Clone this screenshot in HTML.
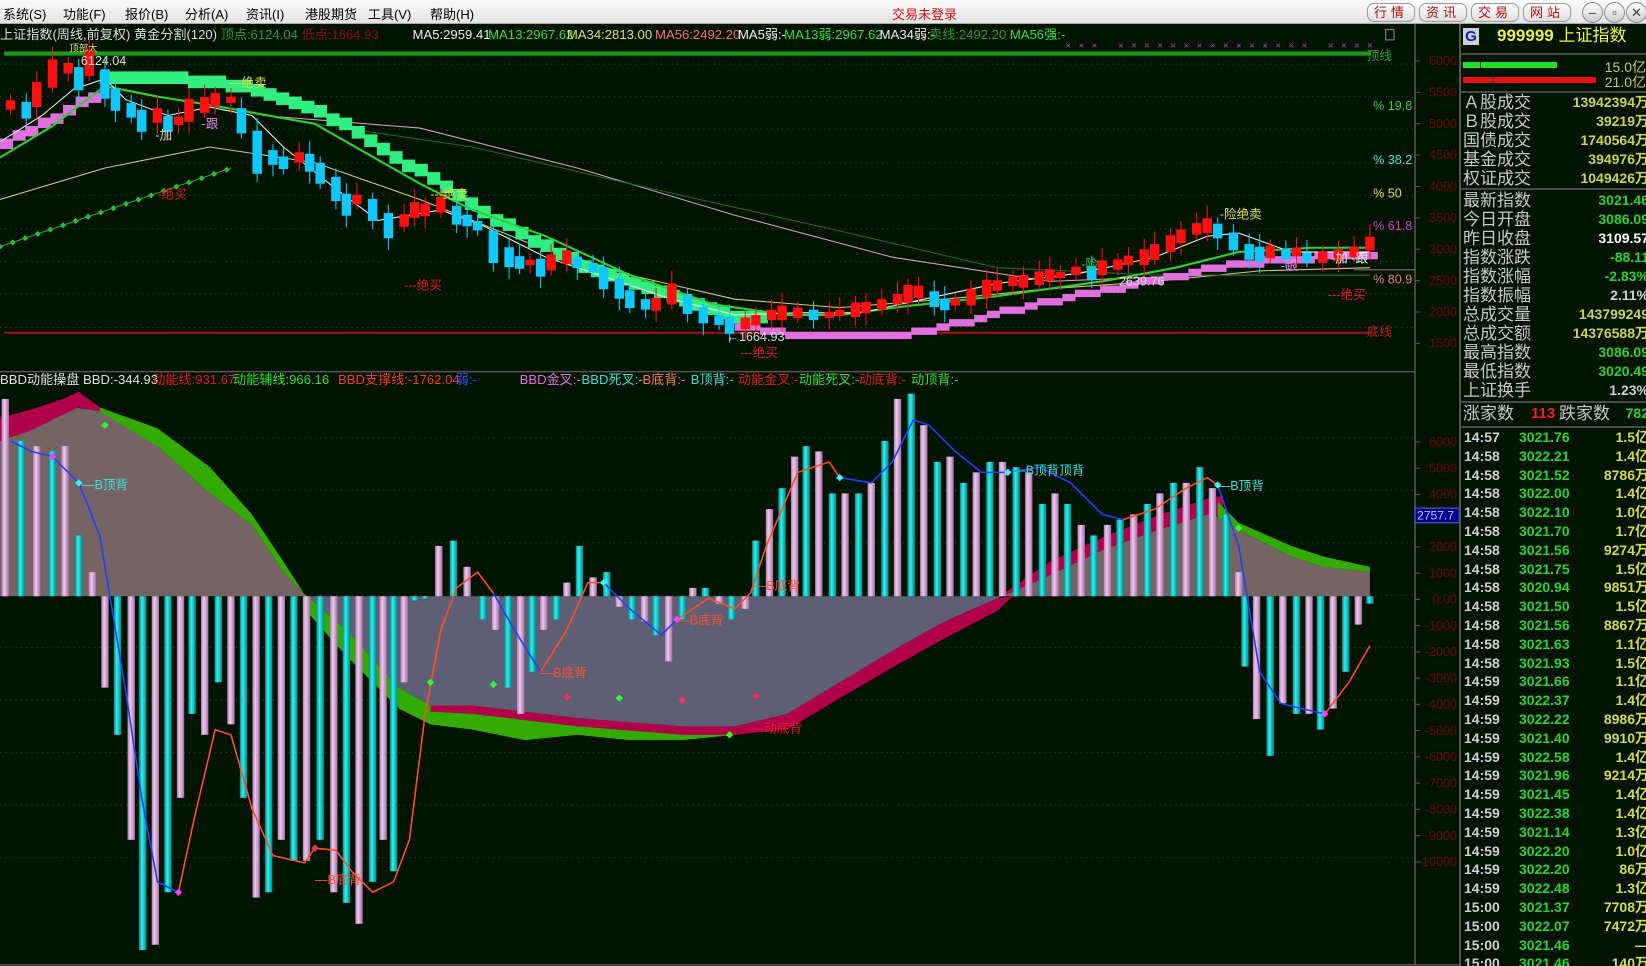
<!DOCTYPE html>
<html><head><meta charset="utf-8">
<style>
*{margin:0;padding:0;box-sizing:border-box}
body{width:1646px;height:966px;overflow:hidden;background:#001400;font-family:"Liberation Sans","Noto Sans CJK SC",sans-serif;position:relative}
#menu{position:absolute;left:0;top:0;width:1646px;height:24px;background:linear-gradient(#fafafa,#e4e4e4);border-bottom:1px solid #aaa;font-size:13px;color:#000}
#menu span.m{position:absolute;top:4px}
.btn{position:absolute;top:3px;height:19px;width:48px;border:1px solid #999;border-radius:7px;background:linear-gradient(#fff,#ddd);color:#b01010;font-size:13px;text-align:center;line-height:17px;letter-spacing:4px}
.cir{position:absolute;top:2px;width:21px;height:21px;border:1px solid #888;border-radius:50%;background:linear-gradient(#fff,#ccc);color:#444;font-size:13px;text-align:center;line-height:19px}
svg#ch{position:absolute;left:0;top:0}
#rp{position:absolute;left:1459px;top:24px;width:187px;height:942px;background:#001400;border-left:2px solid #555;overflow:hidden;font-family:"Liberation Sans","Noto Sans CJK SC",sans-serif}
.row{position:absolute;left:2px;width:200px;height:19px;font-size:17px;line-height:19px;color:#c8c8c8}
.row b{position:absolute;right:14px;top:0;font-weight:bold;font-size:14px}
.sep{position:absolute;left:0;width:187px;height:2px;background:#4a4a4a}
.tr{position:absolute;left:2px;width:200px;height:19px;font-size:14px;line-height:19px;font-weight:bold}
.tr .t{position:absolute;left:1px;color:#d0d0d0}
.tr .p{position:absolute;left:56px;color:#30d030}
.tr .v{position:absolute;right:14px;color:#d8d850}
</style></head><body>
<svg id="ch" width="1646" height="966" viewBox="0 0 1568 920.2" xmlns="http://www.w3.org/2000/svg">
<defs>
<linearGradient id="gp" x1="0" x2="1"><stop offset="0" stop-color="#b080b0"/><stop offset=".4" stop-color="#f0c8f0"/><stop offset="1" stop-color="#a070a0"/></linearGradient>
<linearGradient id="gc" x1="0" x2="1"><stop offset="0" stop-color="#009090"/><stop offset=".4" stop-color="#30f0f0"/><stop offset="1" stop-color="#008888"/></linearGradient>
<clipPath id="ab"><rect x="0" y="0" width="1320" height="568"/></clipPath>
<clipPath id="bl"><rect x="0" y="568" width="1320" height="400"/></clipPath>
</defs>
<rect x="0" y="0" width="1568" height="921" fill="#001400"/>
<g id="g"></g>
<line x1="1348" y1="22" x2="1348" y2="920" stroke="#555" stroke-width="1.5"/>
<line x1="0" y1="354" x2="1348" y2="354" stroke="#555" stroke-width="1.5"/>
<line x1="0" y1="919" x2="1390" y2="919" stroke="#555" stroke-width="1.5"/>
<rect x="1320" y="28" width="8" height="10" fill="none" stroke="#888" stroke-width="1"/>
<g font-size="12.5" fill="#ddd">
<text x="0" y="37"><tspan fill="#ddd">上证指数(周线,前复权) 黄金分割(120) </tspan><tspan fill="#2a9a2a">顶点:6124.04 </tspan><tspan fill="#8a1010">低点:1664.93</tspan></text>
<text x="393" y="37" fill="#eee">MA5:2959.41</text>
<text x="465" y="37" fill="#30e030">MA13:2967.62</text>
<text x="540" y="37" fill="#e0e060">MA34:2813.00</text>
<text x="624" y="37" fill="#ff7070">MA56:2492.20</text>
<text x="703" y="37" fill="#eee">MA5弱:-</text>
<text x="747" y="37" fill="#30e030">MA13弱:2967.62</text>
<text x="838" y="37" fill="#eee">MA34弱:-</text>
<text x="885" y="37" fill="#2a9a2a">卖线:2492.20</text>
<text x="962" y="37" fill="#30e030">MA56强:-</text>
<text x="0" y="366" fill="#e0e0e0">BBD动能操盘  BBD:-344.93</text>
<text x="145" y="366" fill="#e02020">动能线:931.67</text>
<text x="222" y="366" fill="#30e030">动能辅线:966.16</text>
<text x="322" y="366" fill="#f04020">BBD支撑线:-1762.04</text>
<text x="434" y="366" fill="#3050ff">弱:-</text>
<text x="495" y="366" fill="#e070e0">BBD金叉:-</text>
<text x="554" y="366" fill="#30e0e0">BBD死叉:-</text>
<text x="612" y="366" fill="#ff8040">B底背:-</text>
<text x="658" y="366" fill="#30e0e0">B顶背:-</text>
<text x="703" y="366" fill="#e02020">动能金叉:-</text>
<text x="761" y="366" fill="#30e030">动能死叉:-</text>
<text x="818" y="366" fill="#e02020">动底背:-</text>
<text x="868" y="366" fill="#30e030">动顶背:-</text>
</g>
<g font-size="12" fill="#6a0a0a" text-anchor="end" id="ax"></g>
<g font-size="12">
<text x="1308" y="105" fill="#30d030">% 19.8</text>
<text x="1308" y="156" fill="#40e0e0">% 38.2</text>
<text x="1308" y="188" fill="#e0e040">% 50</text>
<text x="1308" y="219" fill="#d040d0">% 61.8</text>
<text x="1308" y="270" fill="#e08080">% 80.9</text>
<line x1="1290" y1="257" x2="1348" y2="257" stroke="#777"/>
<text x="1302" y="57" fill="#30a030">顶线</text>
<text x="1302" y="320" fill="#c02020">底线</text>
<rect x="1348" y="484" width="42" height="14" fill="#000090" stroke="#6060c0"/>
<text x="1350" y="495" fill="#c0c0ff" font-size="11.5">2757.7</text>
</g>
<g font-size="12">
<text x="66" y="49" fill="#e0e060" font-size="9">顶部大</text>
<text x="77" y="62" fill="#ddd">6124.04</text>
<text x="218" y="83" fill="#e0e040">---绝卖</text>
<text x="148" y="133" fill="#f0d0d0">-加</text>
<text x="192" y="122" fill="#f080f0">-跟</text>
<text x="150" y="189" fill="#e02020">-绝买</text>
<text x="410" y="189" fill="#e0e040">---绝卖</text>
<text x="385" y="276" fill="#e02020">---绝买</text>
<text x="692" y="325" fill="#ddd">←1664.93</text>
<text x="705" y="340" fill="#e02020">---绝买</text>
<text x="1030" y="256" fill="#30d030">-险</text>
<text x="1066" y="272" fill="#ddd">2639.76</text>
<text x="1162" y="208" fill="#e0e040">-险绝卖</text>
<text x="1220" y="257" fill="#f080f0">-跟</text>
<text x="1268" y="250" fill="#eee">-加 -跟</text>
<text x="1265" y="285" fill="#e02020">---绝买</text>
<text x="78" y="466" fill="#40e0e0">—B顶背</text>
<text x="1160" y="467" fill="#40e0e0">—B顶背</text>
<text x="965" y="452" fill="#40e0e0">—B顶背顶背</text>
<text x="300" y="842" fill="#ff5030">—B底背</text>
<text x="515" y="645" fill="#ff5030">—B底背</text>
<text x="645" y="595" fill="#ff5030">—B底背</text>
<text x="718" y="562" fill="#ff5030">—B底背</text>
<text x="716" y="698" fill="#e02020">—动底背</text>
</g>
</svg>
<div id="menu">
<span class="m" style="left:3px">系统(S)</span><span class="m" style="left:63px">功能(F)</span><span class="m" style="left:125px">报价(B)</span><span class="m" style="left:185px">分析(A)</span><span class="m" style="left:246px">资讯(I)</span><span class="m" style="left:305px">港股期货</span><span class="m" style="left:368px">工具(V)</span><span class="m" style="left:430px">帮助(H)</span>
<span class="m" style="left:892px;color:#e01010">交易未登录</span>
<div class="btn" style="left:1367px">行情</div><div class="btn" style="left:1419px">资讯</div><div class="btn" style="left:1471px">交易</div><div class="btn" style="left:1523px">网站</div>
<div class="cir" style="left:1582px">–</div><div class="cir" style="left:1604px">▫</div><div class="cir" style="left:1626px">✕</div>
</div>
<div id="rp"></div>
<script>
(function(){
var NS="http://www.w3.org/2000/svg",G=document.getElementById("g");
function el(t,a){var e=document.createElementNS(NS,t);for(var k in a)e.setAttribute(k,a[k]);G.appendChild(e);return e}
function pl(p,c,w){return el("polyline",{points:p.map(function(q){return q.join(",")}).join(" "),fill:"none",stroke:c,"stroke-width":w||1})}
function interp(p,x){for(var i=0;i<p.length-1;i++){if(x>=p[i][0]&&x<=p[i+1][0]){var t=(x-p[i][0])/(p[i+1][0]-p[i][0]);return p[i][1]+t*(p[i+1][1]-p[i][1])}}return p[p.length-1][1]}
function steps(p,c,h,sw){for(var x=p[0][0];x<p[p.length-1][0];x+=sw){var y=Math.round(interp(p,x)/4)*4;el("rect",{x:x,y:y,width:sw+0.5,height:h,fill:c})}}
function band(xs,tp,bt,c){var pts=[];for(var i=0;i<xs.length;i++)pts.push(xs[i]+","+tp[i]);for(var i=xs.length-1;i>=0;i--)pts.push(xs[i]+","+bt[i]);el("polygon",{points:pts.join(" "),fill:c})}
[61,92,123,155,186,218,249,280,312].forEach(function(y){el("line",{x1:0,y1:y,x2:1348,y2:y,stroke:"#2e4a2e","stroke-dasharray":"1 4"})});
[417,467,517,567,617,667,717,767,817].forEach(function(y){el("line",{x1:0,y1:y,x2:1348,y2:y,stroke:"#2e4a2e","stroke-dasharray":"1 4"})});
var ax=document.getElementById("ax");
function at(x,y,s){var t=document.createElementNS(NS,"text");t.setAttribute("x",x);t.setAttribute("y",y);t.textContent=s;ax.appendChild(t);var l=document.createElementNS(NS,"line");l.setAttribute("x1",1348);l.setAttribute("x2",1353);l.setAttribute("y1",y-4);l.setAttribute("y2",y-4);l.setAttribute("stroke","#555");ax.appendChild(l)}
[6000,5500,5000,4500,4000,3500,3000,2500,2000,1500].forEach(function(v,i){at(1388,62+i*29.9,String(v))});
[["6000",421],["5000",446],["4000",471],["2000",521],["1000",546],["0.00",571],["-1000",596],["-2000",621],["-3000",646],["-4000",671],["-5000",696],["-6000",721],["-7000",746],["-8000",771],["-9000",796],["-10000",821]].forEach(function(a){at(1388,a[1]+4,a[0])});
el("rect",{x:4,y:49,width:1302,height:4,fill:"#1a9a1a"});
el("rect",{x:4,y:316,width:1302,height:2,fill:"#a01010"});
for(var x=1015;x<=1305;x+=12.5){if(x>1050&&x<1065)continue;if(x>1245&&x<1265)continue;el("text",{x:x,y:46,fill:"#d040d0","font-size":"9"}).textContent="×"}
pl([[0,190],[100,160],[200,140],[300,155],[400,190],[500,230],[600,262],[700,285],[800,293],[900,285],[1000,275],[1100,268],[1200,258],[1305,255]],"#d8c878",1);
pl([[250,110],[400,122],[550,160],[700,205],[850,245],[1000,268],[1150,262],[1305,262]],"#d0a0c0",1);
pl([[280,115],[450,140],[600,175],[800,220],[950,255],[1100,262],[1305,262]],"#1f6a1f",1);
steps([[0,130],[40,112],[70,95],[95,80]],"#e070e0",10,12);
steps([[95,66],[150,68],[200,72],[230,78],[260,88],[300,102],[330,117],[360,137],[400,160],[430,178],[460,198],[500,222],[540,242],[580,258],[620,272],[660,285],[700,296],[725,298]],"#30ee80",12,12);
steps([[700,306],[740,314],[790,316],[850,316],[900,306],[950,294],[1000,283],[1050,272],[1100,262],[1150,252],[1200,246],[1250,242],[1305,238]],"#e070e0",7,12);
pl([[0,150],[50,120],[100,82],[150,92],[200,100],[300,118],[400,175],[450,200],[520,225],[600,262],[680,290],[750,300],[800,300],[860,292],[950,282],[1050,268],[1120,255],[1180,240],[1250,236],[1305,236]],"#30d030",2);
pl([[0,135],[40,110],[70,85],[100,75],[120,95],[160,110],[200,102],[240,110],[270,140],[320,180],[360,210],[420,200],[460,215],[520,245],[580,265],[640,285],[700,300],[760,298],[820,298],[880,285],[950,270],[1030,260],[1100,245],[1150,225],[1180,222],[1230,240],[1305,240]],"#eeeeee",1);
for(var x=0;x<=220;x+=12){var y=235-x*0.34;el("rect",{x:x-2,y:y-2,width:4,height:4,fill:"#30d030",transform:"rotate(45 "+x+" "+y+")"})}
pl([[0,235],[220,160]],"#30a030",1);
var C=[[10,100],[25,105],[35,90],[50,70],[65,65],[75,75],[85,60],[100,80],[110,95],[125,105],[135,115],[150,110],[160,118],[170,115],[180,105],[195,100],[205,95],[220,95],[230,115],[245,145],[260,150],[270,155],[285,150],[295,155],[305,165],[320,180],[330,195],[340,190],[355,200],[370,215],[385,210],[395,200],[405,200],[420,195],[435,205],[445,210],[455,215],[470,235],[485,245],[495,250],[505,250],[515,255],[525,250],[540,245],[550,250],[565,255],[575,265],[590,275],[600,285],[615,290],[625,290],[640,280],[655,290],[670,300],[685,305],[695,310],[710,308],[720,305],[735,300],[745,298],[760,298],[775,300],[790,300],[800,298],[815,295],[825,293],[840,290],[855,285],[865,280],[875,278],[890,285],[900,290],[910,288],[925,283],[940,275],[950,272],[965,268],[975,268],[990,265],[1000,262],[1010,262],[1025,258],[1040,260],[1050,255],[1065,252],[1075,248],[1090,245],[1100,240],[1115,232],[1125,225],[1140,218],[1150,215],[1160,220],[1175,230],[1190,240],[1200,242],[1210,240],[1225,242],[1235,240],[1245,245],[1260,245],[1275,243],[1290,240],[1305,232]];
for(var i=0;i<C.length;i++){var x=C[i][0],y=C[i][1],py=i?C[i-1][1]:y+5,up=y<=py;var h=Math.max(5,Math.abs(py-y)+4+((i*7)%9));var c=up?"#ff1010":"#10c8ff";
el("line",{x1:x,y1:y-h/2-6-(i%4)*2,x2:x,y2:y+h/2+5+(i%3)*3,stroke:c,"stroke-width":1});
el("rect",{x:x-4.5,y:y-h/2,width:9,height:h,fill:c})}
var SX=[0,30,70,100,150,200,240,270,290,330,380,410,450,500,550,600,650,700,750,800,850,900,950,1000,1050,1100,1150,1160,1180,1230,1260,1305];
var SY=[420,408,388,392,425,470,500,545,566,600,655,672,672,678,684,688,692,692,680,650,620,592,570,548,524,506,490,492,505,530,540,545];
var pts=["0,568"];for(var i=0;i<SX.length;i++)pts.push(SX[i]+","+SY[i]);pts.push("1305,568");
el("polygon",{points:pts.join(" "),fill:"#756464","clip-path":"url(#ab)"});
el("polygon",{points:pts.join(" "),fill:"#5e5e74","clip-path":"url(#bl)"});
band([0,30,60,75,95],[398,390,380,373,388],[420,410,395,388,392],"#b0004a");
band([95,150,200,240,270,290,330,380],[388,408,445,490,535,566,600,655],[392,425,470,500,545,566,600,655],"#33aa00");
band([290,330,380,410,450,500,550,600,650,700],[566,600,655,672,672,678,684,688,692,692],[580,625,675,690,695,705,700,705,705,700],"#33aa00");
band([410,450,500,550,600,650,700],[672,672,678,684,688,692,692],[678,680,686,692,696,700,700],"#b0004a");
band([700,750,800,850,900,950,965],[692,680,650,620,592,570,568],[700,695,665,636,608,582,568],"#b0004a");
band([955,1000,1050,1100,1150,1165],[566,535,512,492,475,472],[568,548,524,506,490,492],"#b0004a");
band([1160,1180,1230,1260,1305],[478,498,520,530,540],[492,505,530,540,545],"#33aa00");
var B=[[5,380],[20,420],[35,425],[50,430],[62,425],[75,510],[88,545],[100,655],[112,700],[125,800],[136,905],[148,900],[160,850],[172,760],[183,680],[195,700],[208,650],[220,690],[232,760],[244,855],[256,850],[268,800],[280,820],[292,820],[305,800],[318,850],[330,860],[342,880],[355,840],[365,800],[375,830],[385,650],[395,572],[405,570],[418,520],[432,515],[445,540],[460,590],[472,600],[484,655],[496,680],[507,640],[518,600],[530,590],[540,555],[552,520],[565,550],[578,545],[590,578],[602,590],[614,592],[625,605],[637,630],[650,590],[660,560],[672,560],[685,575],[697,590],[710,580],[720,515],[733,485],[745,465],[757,435],[768,425],[780,430],[793,470],[805,470],[818,470],[830,460],[843,420],[855,380],[868,375],[880,405],[893,440],[905,435],[918,460],[930,450],[943,440],[955,440],[968,445],[980,450],[993,480],[1005,470],[1017,480],[1030,500],[1042,510],[1055,500],[1067,495],[1080,490],[1093,480],[1105,470],[1118,460],[1130,460],[1143,445],[1155,465],[1168,490],[1180,545],[1186,635],[1197,685],[1210,720],[1222,670],[1235,680],[1247,680],[1258,695],[1270,675],[1282,640],[1294,595],[1305,575]];
for(var i=0;i<B.length;i++){var x=B[i][0],y=B[i][1];var pk=(i%2==0);if(i>=7&&i<33)pk=(i%2==1);var by=Math.min(y,568),bh=Math.abs(y-568);el("rect",{x:x-3.5,y:by,width:7,height:Math.max(bh,2),fill:pk?"url(#gp)":"url(#gc)"})}
var BL=[[[10,420],[30,430],[50,435],[75,460],[95,510],[110,600],[120,660],[135,760],[150,840],[170,850]],[[470,565],[490,600],[515,640]],[[575,555],[600,580],[630,605],[645,590]],[[800,455],[830,460],[850,440],[870,400],[885,405],[910,430],[935,450],[960,450],[990,445],[1020,460],[1050,490],[1070,495]],[[1160,462],[1180,520],[1200,640],[1220,670],[1240,675],[1262,680]]];
var OR=[[[170,850],[185,780],[205,695],[220,700],[240,770],[260,815],[290,822],[300,808],[320,810],[335,830],[355,850],[375,840],[390,800],[405,680],[420,600],[435,560],[455,545],[470,565]],[[515,640],[540,600],[560,555],[575,555]],[[645,590],[675,570],[700,580],[715,565],[730,520],[760,450],[790,440],[800,455]],[[1070,495],[1100,485],[1130,465],[1150,455],[1160,462]],[[1262,680],[1285,650],[1305,615]]];
BL.forEach(function(p){pl(p,"#2040ff",1.5)});
OR.forEach(function(p){pl(p,"#ff5020",1.5)});
[[75,460,"#40f0f0"],[1160,462,"#40f0f0"],[800,455,"#40f0f0"],[575,555,"#40f0f0"],[960,450,"#40f0f0"],[170,850,"#ff40ff"],[1262,680,"#ff40ff"],[645,590,"#ff40ff"],[50,435,"#ff40ff"],[100,405,"#30ff30"],[1180,503,"#30ff30"],[470,652,"#30ff30"],[695,700,"#30ff30"],[590,665,"#30ff30"],[410,650,"#30ff30"],[540,664,"#ff3060"],[650,667,"#ff3060"],[300,808,"#ff3060"],[720,663,"#ff3060"]].forEach(function(d){el("rect",{x:d[0]-2.5,y:d[1]-2.5,width:5,height:5,fill:d[2],transform:"rotate(45 "+d[0]+" "+d[1]+")"})});
var rp=document.getElementById("rp"),h="";
h+='<div style="position:absolute;left:2px;top:4px;width:16px;height:17px;background:#d0d0d0;color:#1020c0;font-size:15px;font-weight:bold;text-align:center;line-height:17px">G</div>';
h+='<div style="position:absolute;left:36px;top:2px;color:#f0f040;font-size:17px;line-height:20px"><b>999999</b> 上证指数</div>';
h+='<div class="sep" style="top:29px"></div>';
h+='<div style="position:absolute;left:2px;top:38px;width:94px;height:6px;background:#20e020"></div><div style="position:absolute;left:19px;top:38px;width:1px;height:6px;background:#001400"></div>';
h+='<div style="position:absolute;left:2px;top:53px;width:133px;height:6px;background:#f01010"></div><div style="position:absolute;left:32px;top:53px;width:1px;height:6px;background:#001400"></div>';
h+='<div style="position:absolute;right:0;top:33px;color:#c8c870;font-size:14px">15.0亿</div><div style="position:absolute;right:0;top:48px;color:#c8c870;font-size:14px">21.0亿</div>';
h+='<div class="sep" style="top:67px"></div>';
var r1=[["Ａ股成交","13942394万"],["Ｂ股成交","39219万"],["国债成交","1740564万"],["基金成交","394976万"],["权证成交","1049426万"]];
r1.forEach(function(r,i){h+='<div class="row" style="top:'+(69+i*19)+'px">'+r[0]+'<b style="color:#d0d050">'+r[1]+'</b></div>'});
h+='<div class="sep" style="top:164px"></div>';
var r2=[["最新指数","3021.46","#30d030"],["今日开盘","3086.09","#30d030"],["昨日收盘","3109.57","#ffffff"],["指数涨跌","-88.11","#30d030"],["指数涨幅","-2.83%","#30d030"],["指数振幅","2.11%","#d0d0d0"],["总成交量","143799249","#d0d050"],["总成交额","14376588万","#d0d050"],["最高指数","3086.09","#30d030"],["最低指数","3020.49","#30d030"],["上证换手","1.23%","#d0d0d0"]];
r2.forEach(function(r,i){h+='<div class="row" style="top:'+(167+i*19)+'px">'+r[0]+'<b style="color:'+r[2]+'">'+r[1]+'</b></div>'});
h+='<div class="sep" style="top:377px"></div>';
h+='<div class="row" style="top:380px">涨家数 <span style="position:absolute;left:68px;color:#f02020;font-size:15px;font-weight:bold">113</span><span style="position:absolute;left:96px">跌家数</span><b style="color:#30d030">782</b></div>';
h+='<div class="sep" style="top:402px"></div>';
var T=[["14:57","3021.76","1.5亿"],["14:58","3022.21","1.4亿"],["14:58","3021.52","8786万"],["14:58","3022.00","1.4亿"],["14:58","3022.10","1.0亿"],["14:58","3021.70","1.7亿"],["14:58","3021.56","9274万"],["14:58","3021.75","1.5亿"],["14:58","3020.94","9851万"],["14:58","3021.50","1.5亿"],["14:58","3021.56","8867万"],["14:58","3021.63","1.1亿"],["14:58","3021.93","1.5亿"],["14:59","3021.66","1.1亿"],["14:59","3022.37","1.4亿"],["14:59","3022.22","8986万"],["14:59","3021.40","9910万"],["14:59","3022.58","1.4亿"],["14:59","3021.96","9214万"],["14:59","3021.45","1.4亿"],["14:59","3022.38","1.4亿"],["14:59","3021.14","1.3亿"],["14:59","3022.20","1.0亿"],["14:59","3022.20","86万"],["14:59","3022.48","1.3亿"],["15:00","3021.37","7708万"],["15:00","3022.07","7472万"],["15:00","3021.46","—"],["15:00","3021.46","140万"]];
T.forEach(function(r,i){h+='<div class="tr" style="top:'+(404+i*18.8)+'px"><span class="t">'+r[0]+'</span><span class="p">'+r[1]+'</span><span class="v">'+r[2]+'</span></div>'});
rp.innerHTML=h;
})();
</script>
</body></html>
